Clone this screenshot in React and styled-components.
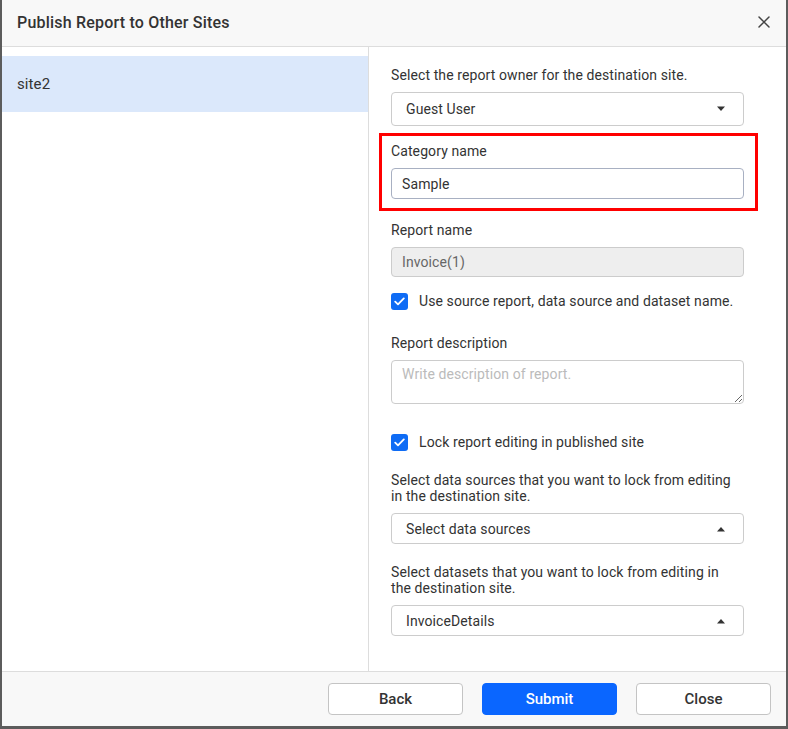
import styled, { createGlobalStyle } from "styled-components";

const GlobalStyle = createGlobalStyle`
  html, body {
    margin: 0;
    padding: 0;
    background: #ffffff;
  }
  * {
    box-sizing: border-box;
  }
`;

const Caret = ({ up }) => (
  <svg width="10" height="6" viewBox="0 0 10 6">
    {up ? (
      <path d="M1 5.5 L5 1 L9 5.5 Z" fill="#333" />
    ) : (
      <path d="M1 0.5 L9 0.5 L5 5 Z" fill="#333" />
    )}
  </svg>
);

const Check = () => (
  <svg width="11" height="9" viewBox="0 0 11 9">
    <path
      d="M1.2 4.6 L4 7.3 L9.8 1.4"
      fill="none"
      stroke="#fff"
      strokeWidth="1.8"
      strokeLinecap="round"
      strokeLinejoin="round"
    />
  </svg>
);

const App = () => {
  return (
    <>
      <GlobalStyle />
      <Dialog>
        <Header>
          <Title>Publish Report to Other Sites</Title>
          <CloseIcon>
            <svg width="12" height="12" viewBox="0 0 12 12">
              <path
                d="M1 1 L11 11 M11 1 L1 11"
                stroke="#444"
                strokeWidth="1.5"
                strokeLinecap="round"
              />
            </svg>
          </CloseIcon>
        </Header>
        <Body>
          <SiteList>
            <SiteItem selected>site2</SiteItem>
          </SiteList>
          <Form>
            <Label>Select the report owner for the destination site.</Label>
            <Select tall>
              <span>Guest User</span>
              <Caret />
            </Select>

            <Highlight>
              <Label>Category name</Label>
              <Input accent defaultValue="Sample" />
            </Highlight>

            <Label spaced="11px">Report name</Label>
            <Input disabled defaultValue="Invoice(1)" />

            <CheckRow spaced="15px">
              <Box>
                <Check />
              </Box>
              Use source report, data source and dataset name.
            </CheckRow>

            <Label spaced="25px">Report description</Label>
            <TextArea placeholder="Write description of report." />

            <CheckRow spaced="29px">
              <Box>
                <Check />
              </Box>
              Lock report editing in published site
            </CheckRow>

            <Label spaced="21px">
              Select data sources that you want to lock from editing in the
              destination site.
            </Label>
            <Select>
              <span>Select data sources</span>
              <Caret up />
            </Select>

            <Label spaced="20px">
              Select datasets that you want to lock from editing in the
              destination site.
            </Label>
            <Select>
              <span>InvoiceDetails</span>
              <Caret up />
            </Select>
          </Form>
        </Body>
        <Footer>
          <Button>Back</Button>
          <Button primary>Submit</Button>
          <Button>Close</Button>
        </Footer>
      </Dialog>
    </>
  );
};

const Dialog = styled.div`
  width: 788px;
  height: 729px;
  display: flex;
  flex-direction: column;
  background: #fff;
  border-left: 2px solid #5c5c5c;
  border-right: 2px solid #5c5c5c;
  border-bottom: 3px solid #5c5c5c;
  font-family: Roboto, "Liberation Sans", sans-serif;
  letter-spacing: 0.1px;
  color: #333;
`;

const Header = styled.div`
  height: 47px;
  flex-shrink: 0;
  display: flex;
  align-items: center;
  justify-content: space-between;
  padding: 0 16px 2px 15px;
  background: #f8f8f8;
  border-bottom: 1px solid #dddddd;
`;

const Title = styled.div`
  font-size: 16px;
  font-weight: 500;
  letter-spacing: 0.2px;
  color: #333;
`;

const CloseIcon = styled.div`
  width: 12px;
  height: 12px;
  display: flex;
`;

const Body = styled.div`
  flex: 1;
  display: flex;
  min-height: 0;
`;

const SiteList = styled.div`
  width: 367px;
  flex-shrink: 0;
  padding-top: 9px;
  border-right: 1px solid #dddddd;
`;

const SiteItem = styled.div`
  height: 56px;
  display: flex;
  align-items: center;
  padding: 0 15px 1px;
  font-size: 15px;
  color: #333;
  background: ${(p) => (p.selected ? "#dbe8fb" : "transparent")};
`;

const Form = styled.div`
  flex: 1;
  display: flex;
  flex-direction: column;
  padding: 20px 42px 0 22px;
`;

const Label = styled.div`
  font-size: 14px;
  line-height: 16px;
  color: #333;
  padding-right: 6px;
  margin-top: ${(p) => p.spaced || "0"};
  margin-bottom: 9px;
`;

const Select = styled.div`
  height: ${(p) => (p.tall ? "34px" : "31px")};
  display: flex;
  align-items: center;
  justify-content: space-between;
  padding: 0 17px 0 14px;
  border: 1px solid #cccccc;
  border-radius: 4px;
  font-size: 14px;
  color: #333;
  background: #fff;
`;

const Highlight = styled.div`
  margin: 7px -14px 0 -12px;
  padding: 7px 11px 9px 9px;
  border: 3px solid #ff0000;
`;

const Input = styled.input`
  width: 100%;
  height: ${(p) => (p.accent ? "31px" : "30px")};
  padding: 0 10px;
  border: 1px solid ${(p) => (p.accent ? "#a8b0c2" : "#cccccc")};
  border-radius: 4px;
  font-family: Roboto, "Liberation Sans", sans-serif;
  font-size: 14px;
  letter-spacing: 0.1px;
  color: #333;
  background: #fff;
  outline: none;
  &:disabled {
    background: #eeeeee;
    color: #666;
  }
`;

const CheckRow = styled.div`
  display: flex;
  align-items: center;
  gap: 11px;
  height: 18px;
  margin-top: ${(p) => p.spaced || "0"};
  font-size: 14px;
  color: #333;
`;

const Box = styled.span`
  width: 17px;
  height: 17px;
  flex-shrink: 0;
  display: flex;
  align-items: center;
  justify-content: center;
  border-radius: 3px;
  background: #0f6cf5;
`;

const TextArea = styled.textarea`
  width: 100%;
  height: 44px;
  padding: 5px 10px;
  border: 1px solid #cccccc;
  border-radius: 4px;
  font-family: Roboto, "Liberation Sans", sans-serif;
  font-size: 14px;
  letter-spacing: 0.1px;
  color: #333;
  resize: vertical;
  outline: none;
  &::placeholder {
    color: #bbbbbb;
  }
`;

const Footer = styled.div`
  height: 55px;
  flex-shrink: 0;
  display: flex;
  align-items: center;
  justify-content: flex-end;
  gap: 19px;
  padding: 0 15px 1px 0;
  background: #f8f8f8;
  border-top: 1px solid #dddddd;
`;

const Button = styled.button`
  width: 135px;
  height: 32px;
  border-radius: 4px;
  border: 1px solid ${(p) => (p.primary ? "#0a66ff" : "#c4c4c4")};
  background: ${(p) => (p.primary ? "#0a66ff" : "#ffffff")};
  color: ${(p) => (p.primary ? "#ffffff" : "#333")};
  font-family: Roboto, "Liberation Sans", sans-serif;
  font-size: 15px;
  font-weight: 500;
  cursor: pointer;
`;

export default App;
